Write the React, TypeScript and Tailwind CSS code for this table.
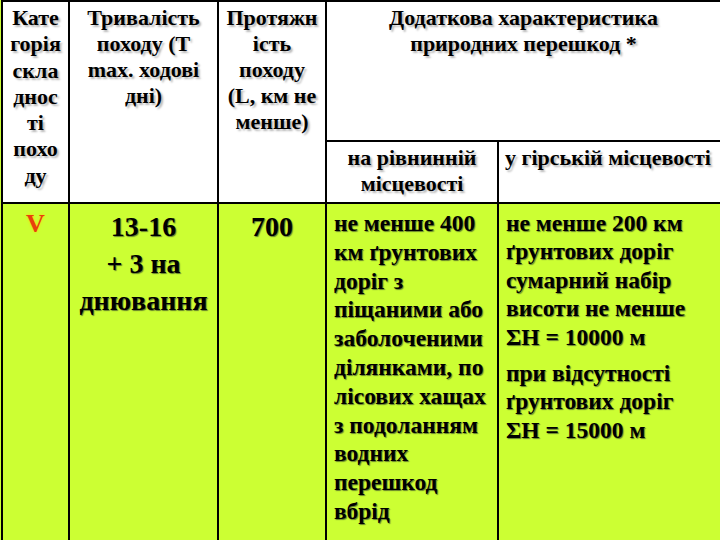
import React from "react";

const hdr = "[text-shadow:2px_2px_2px_#b8b8b8]";
const body = "[text-shadow:1px_1px_1px_rgba(0,0,40,0.5)]";
const cell = "border-2 border-black align-top whitespace-nowrap [font-family:'Liberation_Serif'] font-bold";

export default function App() {
  return (
    <div className="w-[720px] h-[540px] overflow-hidden bg-[#ccff33] [font-family:'Liberation_Serif'] font-bold text-black">
      <table className="table-fixed border-collapse ml-px w-[723px] [font-family:'Liberation_Serif']">
        <colgroup>
          <col className="w-[67px]" />
          <col className="w-[149px]" />
          <col className="w-[108px]" />
          <col className="w-[172px]" />
          <col className="w-[227px]" />
        </colgroup>
        <tbody>
          <tr className="h-[140px]">
            <td rowSpan={2} className={`${cell} bg-white text-center text-[22px] leading-[26.3px] pt-[3px] ${hdr}`}>
              Кате<br />горія<br />скла<br />днос<br />ті<br />похо<br />ду
            </td>
            <td rowSpan={2} className={`${cell} bg-white text-center text-[22px] leading-[26px] pt-[3px] ${hdr}`}>
              Тривалість<br />походу (Т<br />max. ходові<br />дні)
            </td>
            <td rowSpan={2} className={`${cell} bg-white text-center text-[22px] leading-[26px] pt-[3px] ${hdr}`}>
              Протяжн<br />ість<br />походу<br />(L, км не<br />менше)
            </td>
            <td colSpan={2} className={`${cell} bg-white text-center text-[22px] leading-[26px] pt-[3px] pr-[4px] ${hdr}`}>
              Додаткова характеристика<br />природних перешкод *
            </td>
          </tr>
          <tr className="h-[62px]">
            <td className={`${cell} bg-white text-center text-[22px] leading-[26px] pt-[3px] ${hdr}`}>
              на рівнинній<br />місцевості
            </td>
            <td className={`${cell} bg-white text-left text-[22px] leading-[26px] pt-[3px] pl-[6px] ${hdr}`}>
              у гірській місцевості
            </td>
          </tr>
          <tr className="h-[360px]">
            <td className={`${cell} text-center pt-[6px]`}>
              <span className="text-[26px] leading-[28px] text-[#e8400c] [text-shadow:0_0_3px_#ffd000]">V</span>
            </td>
            <td className={`${cell} text-center text-[28px] leading-[37px] pt-[4px] ${body}`}>
              13-16<br />+ 3 на<br />днювання
            </td>
            <td className={`${cell} text-center text-[28px] leading-[37px] pt-[4px] ${body}`}>
              700
            </td>
            <td className={`${cell} text-left text-[23.5px] leading-[28.8px] pt-[5px] pl-[7px] ${body}`}>
              не менше 400<br />км ґрунтових<br />доріг з<br />піщаними або<br />заболоченими<br />ділянками, по<br />лісових хащах<br />з подоланням<br />водних<br />перешкод<br />вбрід
            </td>
            <td className={`${cell} text-left text-[23.5px] leading-[28.4px] pt-[5px] pl-[7px] ${body}`}>
              <div>не менше 200 км<br />ґрунтових доріг<br />сумарний набір<br />висоти не менше<br />ΣН = 10000 м</div>
              <div className="mt-[8px]">при відсутності<br />ґрунтових доріг<br />ΣН = 15000 м</div>
            </td>
          </tr>
        </tbody>
      </table>
    </div>
  );
}
